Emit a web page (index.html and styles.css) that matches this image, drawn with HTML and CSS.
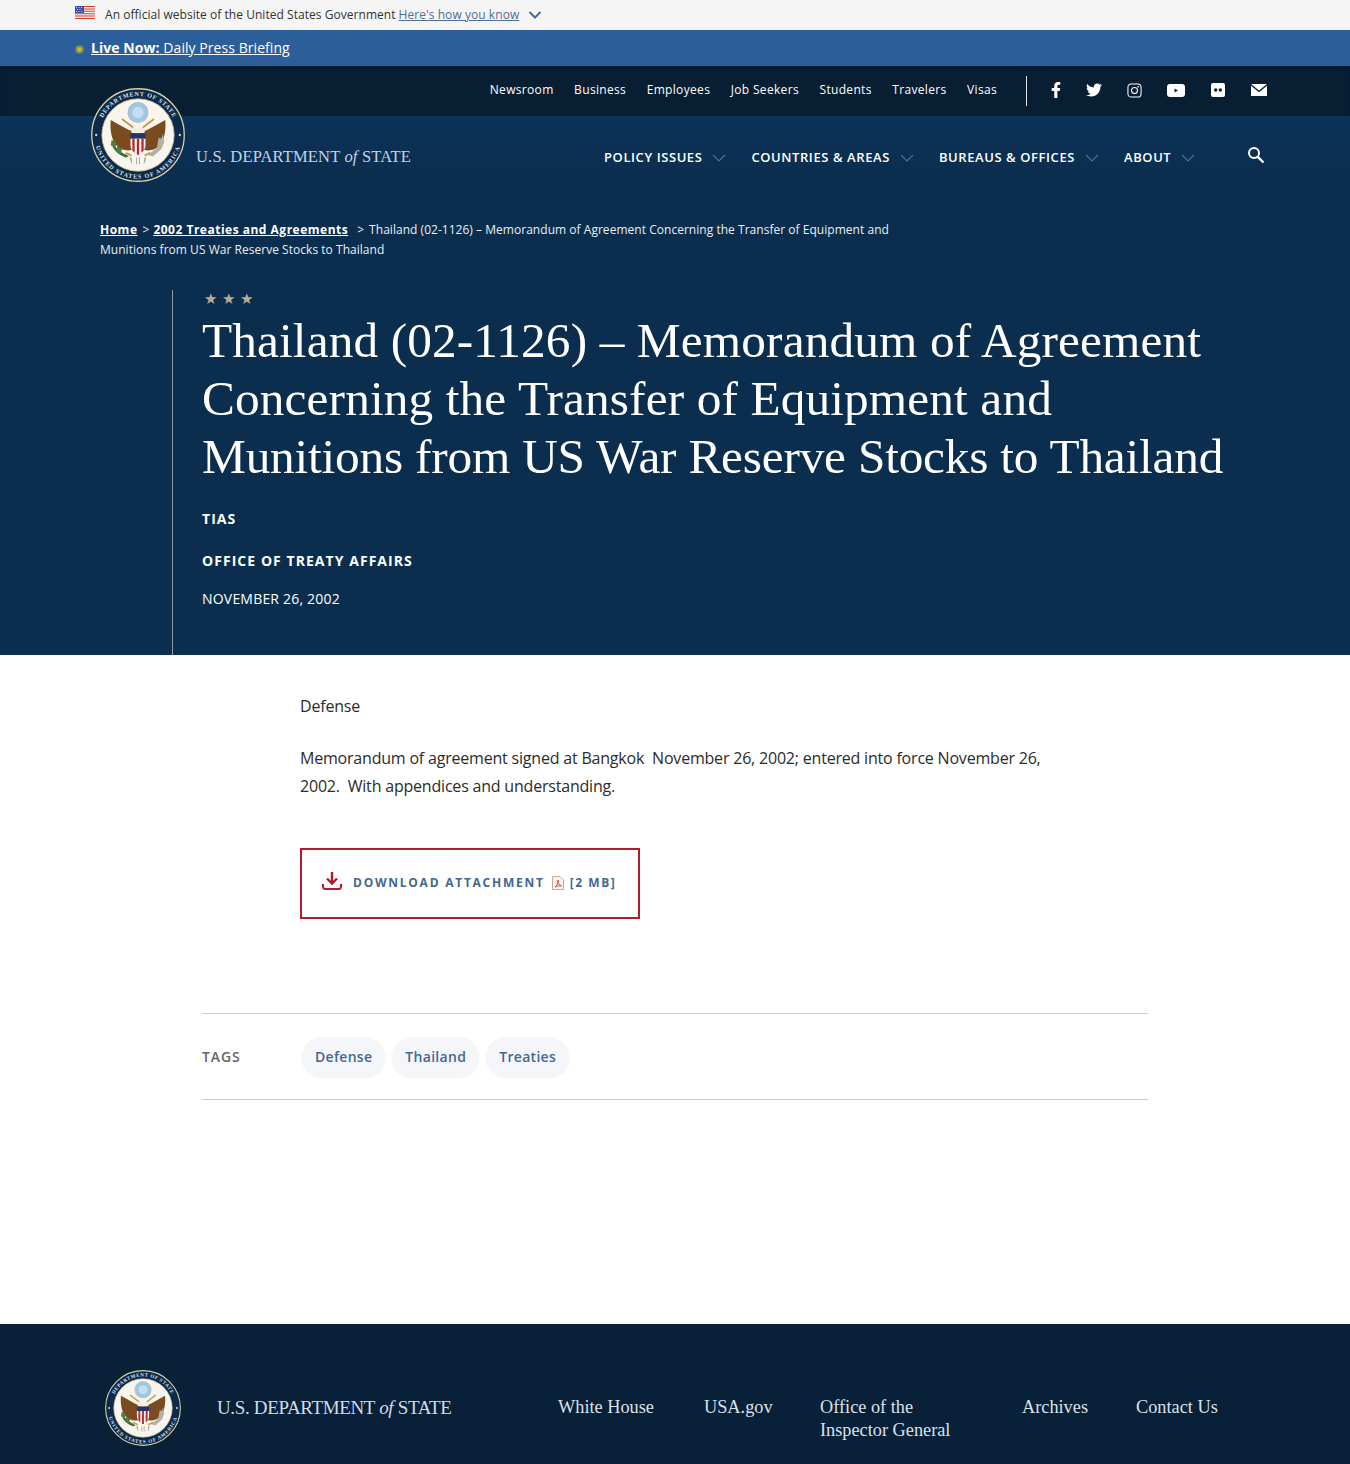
FILE: index.html
```html
<!DOCTYPE html>
<html lang="en">
<head>
<meta charset="utf-8">
<title>Thailand (02-1126)</title>
<link rel="stylesheet" href="styles.css">
</head>
<body>
<svg class="defs" width="0" height="0" aria-hidden="true">
  <defs>
    <path id="arc-top" d="M8.500 50a41.500 41.500 0 0 1 83 0"/>
    <path id="arc-bot" d="M3.500 50a46.500 46.500 0 0 0 93 0"/>
    <symbol id="seal" viewBox="0 0 100 100">
      <circle cx="50" cy="50" r="49.200" fill="#0c2a4c" stroke="#d8cfa6" stroke-width="1.400"/>
      <text class="seal-text"><textPath href="#arc-top" startOffset="50%" text-anchor="middle">DEPARTMENT OF STATE</textPath></text>
      <text class="seal-text seal-text-b"><textPath href="#arc-bot" startOffset="50%" text-anchor="middle">UNITED STATES OF AMERICA</textPath></text>
      <circle cx="5.500" cy="50" r="1.200" fill="#d9dfe6"/>
      <circle cx="94.500" cy="50" r="1.200" fill="#d9dfe6"/>
      <circle cx="50" cy="50" r="38.500" fill="#f7f5ee" stroke="#c9b97e" stroke-width=".8"/>
      <circle cx="50" cy="26" r="10.500" fill="#9cc7e6" stroke="#b8bcc0" stroke-width="1.400"/>
      <circle cx="50" cy="26" r="6" fill="#c4def0"/>
      <path d="M33 33 58 52M67 33 42 52" stroke="#b9983f" stroke-width="1.800"/>
      <path d="M46 47C38 44 30 39 21 34c-1 11 1 22 7 28 4 4 10 5 15 4l5-9z" fill="#7b4a1f"/>
      <path d="M54 47c8-3 16-8 25-13 1 11-1 22-7 28-4 4-10 5-15 4l-5-9z" fill="#7b4a1f"/>
      <circle cx="50" cy="42" r="5" fill="#f6f2e4"/>
      <rect x="43" y="43" width="14" height="5" fill="#f3eee0"/>
      <rect x="42" y="48" width="16" height="6" fill="#23366b"/>
      <path d="M42 54h16v7c0 5-4 8-8 10-4-2-8-5-8-10z" fill="#f5f1ea"/>
      <path d="M44 54h2.400v15l-2.400-2.500zM48.800 54h2.400v17h-2.400zM53.600 54H56v12.500L53.600 69z" fill="#b3262e"/>
      <path d="M24 60c3 3 6 8 14 11l2 2-3 1c-6-2-11-6-14-11z" fill="#3f6f35"/>
      <path d="M22 55l5 3-1 6-5-3zM28 62l5 2-1 6-5-3z" fill="#4f7d40"/>
      <path d="M60 71l10-7 2-11 3 1 1-5 2 8-3 8-9 8z" fill="#b3b1a6"/>
      <path d="M41 74l2 6h1l-1-6zM48 74v7h1v-7zM52 74v7h-1v-7zM59 74l-2 6h-1l1-6z" fill="#a6a49c"/>
      <path d="M37 69l6 3M63 69l-6 3" stroke="#c2a13e" stroke-width="2"/>
    </symbol>
    <symbol id="chev" viewBox="0 0 14 8"><path d="M1 1l6 6 6-6" fill="none" stroke="currentColor" stroke-width="1.100"/></symbol>
    <symbol id="chev-bold" viewBox="0 0 14 8"><path d="M1.500 1l5.500 5.500L12.500 1" fill="none" stroke="currentColor" stroke-width="2"/></symbol>
  </defs>
</svg>

<div class="gov-banner">
  <svg class="flag" viewBox="0 0 20 13" width="20" height="13">
    <rect width="20" height="13" fill="#f4f0ee"/>
    <path d="M0 0h20v1H0zM0 2.400h20v1H0zM0 4.800h20v1H0zM0 7.200h20v1H0zM0 9.600h20v1H0zM0 12h20v1H0z" fill="#d8402f"/>
    <rect width="9" height="7" fill="#3f4fa5"/>
    <path d="M1 1.500h1M3.500 1.500h1M6 1.500h1M2 3.500h1M4.500 3.500h1M1 5.500h1M3.500 5.500h1M6 5.500h1" stroke="#e6e8f5" stroke-width=".8"/>
  </svg>
  <span class="gov-text">An official website of the United States Government</span>
  <a class="gov-link" href="#">Here's how you know</a>
  <svg class="gov-chev"><use href="#chev-bold"/></svg>
</div>

<div class="live-bar">
  <svg class="live-dot" viewBox="0 0 10 10" width="9" height="9"><circle cx="5" cy="5" r="4.500" fill="#7d9a58"/><circle cx="5" cy="5" r="2.200" fill="#d8b62e"/></svg>
  <a class="live-link" href="#"><b>Live Now:</b> Daily Press Briefing</a>
</div>

<div class="dark-top">
<header class="site-header">
  <svg class="seal-main" aria-hidden="true"><use href="#seal"/></svg>
  <div class="util-bar">
    <nav class="util-links">
      <a href="#">Newsroom</a><a href="#">Business</a><a href="#">Employees</a><a href="#">Job Seekers</a><a href="#">Students</a><a href="#">Travelers</a><a href="#">Visas</a>
    </nav>
    <div class="social">
      <svg class="ic ic-f" viewBox="0 0 320 512"><path d="M279.14 288l14.22-92.66h-88.91v-60.13c0-25.35 12.42-50.06 52.24-50.06h40.42V6.26S260.43 0 225.36 0c-73.22 0-121.08 44.38-121.08 124.72v70.62H22.89V288h81.39v224h100.17V288z"/></svg>
      <svg class="ic ic-t" viewBox="0 0 512 512"><path d="M459.37 151.716c.325 4.548.325 9.097.325 13.645 0 138.72-105.583 298.558-298.558 298.558-59.452 0-114.68-17.219-161.137-47.106 8.447.974 16.568 1.299 25.34 1.299 49.055 0 94.213-16.568 130.274-44.832-46.132-.975-84.792-31.188-98.112-72.772 6.498.974 12.995 1.624 19.818 1.624 9.421 0 18.843-1.3 27.614-3.573-48.081-9.747-84.143-51.98-84.143-102.985v-1.299c13.969 7.797 30.214 12.67 47.431 13.319-28.264-18.843-46.781-51.005-46.781-87.391 0-19.492 5.197-37.36 14.294-52.954 51.655 63.675 129.3 105.258 216.365 109.807-1.624-7.797-2.599-15.918-2.599-24.04 0-57.828 46.782-104.934 104.934-104.934 30.213 0 57.502 12.67 76.67 33.137 23.715-4.548 46.456-13.32 66.599-25.34-7.798 24.366-24.366 44.833-46.132 57.827 21.117-2.273 41.584-8.122 60.426-16.243-14.292 20.791-32.161 39.308-52.628 54.253z"/></svg>
      <svg class="ic ic-i" viewBox="0 0 16 16"><rect x="1" y="1" width="14" height="14" rx="3.600" fill="none" stroke="#fff" stroke-width="1.100"/><circle cx="8" cy="8" r="3.200" fill="none" stroke="#fff" stroke-width="1.100"/><circle cx="12" cy="4" r=".9" fill="#fff"/></svg>
      <svg class="ic ic-y" viewBox="0 0 18 13"><rect width="18" height="13" rx="3" fill="#fff"/><path d="M7.500 4.500v4l3.500-2z" fill="#0a2136"/></svg>
      <svg class="ic ic-fl" viewBox="0 0 14 14"><rect width="14" height="14" rx="2" fill="#fff"/><circle cx="4.700" cy="7" r="1.700" fill="#0a2136"/><circle cx="9.300" cy="7" r="1.700" fill="#0a2136"/></svg>
      <svg class="ic ic-m" viewBox="0 0 16 12"><path d="M0 0h16L8 6.500zM0 1.800 8 8.300l8-6.500V12H0z" fill="#fff"/></svg>
    </div>
  </div>
  <div class="main-nav">
    <div class="wordmark">U.S. DEPARTMENT <i>of</i> STATE</div>
    <nav class="nav-items">
      <a href="#">POLICY ISSUES<svg class="nav-chev"><use href="#chev"/></svg></a>
      <a href="#">COUNTRIES &amp; AREAS<svg class="nav-chev"><use href="#chev"/></svg></a>
      <a href="#">BUREAUS &amp; OFFICES<svg class="nav-chev"><use href="#chev"/></svg></a>
      <a href="#">ABOUT<svg class="nav-chev"><use href="#chev"/></svg></a>
    </nav>
    <svg class="search" viewBox="0 0 18 18"><circle cx="7" cy="7" r="5" fill="none" stroke="#fff" stroke-width="2"/><path d="M10.800 10.800 16.500 16.500" stroke="#fff" stroke-width="2.400"/></svg>
  </div>
</header>

<section class="hero">
  <div class="crumbs"><a href="#">Home</a><span class="sep">&gt;</span><a href="#">2002 Treaties and Agreements</a><span class="sep sep-wide">&gt;</span>Thailand (02-1126) – Memorandum of Agreement Concerning the Transfer of Equipment and Munitions from US War Reserve Stocks to Thailand</div>
  <div class="head-block">
    <div class="stars">★ ★ ★</div>
    <h1 class="title"><span class="t-wide">Thailand (02-1126) – Memorandum of Agreement</span><br><span class="t-wide">Concerning the Transfer of Equipment and</span><br><span class="t-tight">Munitions from US War Reserve Stocks to Thailand</span></h1>
    <p class="meta meta-first">TIAS</p>
    <p class="meta">OFFICE OF TREATY AFFAIRS</p>
    <p class="date">NOVEMBER 26, 2002</p>
  </div>
</section>
</div>

<main class="content">
  <div class="body-text">
    <p>Defense</p>
    <p>Memorandum of agreement signed at Bangkok&nbsp; November 26, 2002; entered into force November 26, 2002.&nbsp; With appendices and understanding.</p>
  </div>
  <a class="download" href="#">
    <svg class="dl-icon" viewBox="0 0 20 18" width="20" height="18"><path d="M10 0v11M5 6.500l5 5 5-5" fill="none" stroke="#b31b2c" stroke-width="2.400"/><path d="M1 12v2.500c0 1.500 1 2.500 2.500 2.500h13c1.500 0 2.500-1 2.500-2.500V12" fill="none" stroke="#b31b2c" stroke-width="2"/></svg>
    <span class="dl-label">DOWNLOAD ATTACHMENT</span>
    <svg class="pdf-icon" viewBox="0 0 12 14" width="12" height="14"><path d="M.5.500h7.500l3.500 3.500v9.500H.5z" fill="#fbf3ee" stroke="#c9a99a"/><path d="M3 11c2-1 3-4 3-7 0 3 1 5 3.500 6-3-.5-4.500 0-6.500 1z" fill="none" stroke="#c8412f" stroke-width=".9"/></svg>
    <span class="dl-size">[2 MB]</span>
  </a>
  <div class="tags">
    <span class="tags-label">TAGS</span>
    <a class="pill" href="#">Defense</a>
    <a class="pill" href="#">Thailand</a>
    <a class="pill" href="#">Treaties</a>
  </div>
</main>

<footer class="footer">
  <svg class="seal-foot" aria-hidden="true"><use href="#seal"/></svg>
  <div class="foot-mark">U.S. DEPARTMENT <i>of</i> STATE</div>
  <nav class="foot-links">
    <a class="fl-1" href="#">White House</a>
    <a class="fl-2" href="#">USA.gov</a>
    <a class="fl-3" href="#">Office of the<br>Inspector General</a>
    <a class="fl-4" href="#">Archives</a>
    <a class="fl-5" href="#">Contact Us</a>
  </nav>
</footer>
</body>
</html>
```
FILE: styles.css
```css
* { box-sizing: border-box; }
html, body { margin: 0; padding: 0; }
body {
  width: 1350px;
  height: 1464px;
  overflow: hidden;
  background: #fff;
  font-family: "Open Sans", "Liberation Sans", sans-serif;
  color: #212529;
}
a { color: inherit; }
.defs { position: absolute; }
.seal-text {
  font-family: "Liberation Serif", serif;
  font-size: 6.500px;
  font-weight: 700;
  letter-spacing: .8px;
  fill: #dfe5ec;
}
.seal-text-b { letter-spacing: 1.100px; }

/* gov banner */
.gov-banner {
  height: 30px;
  display: flex;
  align-items: center;
  padding: 0 0 2px 75px;
  background: #f5f5f5;
  font-size: 12px;
  color: #333;
}
.flag { margin-right: 10px; margin-top: -3px; }
.gov-text { letter-spacing: .04px; }
.gov-link { margin-left: 3px; color: #4f6f96; letter-spacing: .06px; }
.gov-chev { width: 14px; height: 8px; margin-left: 9px; margin-top: 2px; color: #4a6a92; }

/* live bar */
.live-bar {
  height: 36px;
  display: flex;
  align-items: center;
  padding-left: 75px;
  background: #2c5e9a;
  color: #fff;
  font-size: 14px;
  letter-spacing: .06px;
}
.live-dot { margin-right: 7px; margin-top: 3px; }
.live-link { margin-bottom: 2px; }

/* header */
.dark-top { background: linear-gradient(#0c3358 50px, #0b2e4f 110px); }
.site-header { position: relative; height: 134px; }
.seal-main { position: absolute; left: 91px; top: 22px; width: 94px; height: 94px; }
.util-bar {
  height: 50px;
  display: flex;
  align-items: center;
  justify-content: flex-end;
  background: #081e33;
  box-shadow: inset 0 3px 3px -1px rgba(0, 20, 50, .6);
  color: #fff;
}
.util-links { display: flex; gap: 20.500px; font-size: 12px; letter-spacing: .33px; margin-right: 29px; margin-top: -4px; }
.util-links a { text-decoration: none; }
.social {
  width: 324px;
  height: 30px;
  display: flex;
  align-items: center;
  border-left: 1px solid #e5e9ee;
}
.ic { fill: #fff; display: block; margin-top: -2px; }
.ic-f { width: 10px; height: 16px; margin-left: 24px; }
.ic-t { width: 16px; height: 16px; margin-left: 25px; }
.ic-i { width: 15px; height: 15px; margin-left: 25px; }
.ic-y { width: 18px; height: 13px; margin-left: 25px; }
.ic-fl { width: 14px; height: 14px; margin-left: 26px; }
.ic-m { width: 16px; height: 12px; margin-left: 26px; }

.main-nav { height: 84px; display: flex; align-items: flex-start; padding-left: 196px; color: #fff; }
.wordmark {
  width: 408px;
  padding-top: 31px;
  font-family: "Liberation Serif", serif;
  font-size: 16.500px;
  line-height: 20px;
  color: #c3d3e2;
  letter-spacing: .17px;
}
.nav-items { display: flex; padding-top: 32px; font-size: 13px; font-weight: 600; letter-spacing: .58px; line-height: 18px; }
.nav-items a { text-decoration: none; display: flex; align-items: center; margin-right: 25px; }
.nav-chev { width: 14px; height: 8px; margin-left: 10px; margin-top: 2px; color: #50718f; }
.search { width: 18px; height: 18px; margin: 30px 0 0 27px; }

/* hero */
.hero { height: 455px; color: #fff; padding: 20px 0 0 100px; }
.crumbs { width: 800px; font-size: 12px; line-height: 20px; color: #e8eef4; letter-spacing: .03px; }
.crumbs a { font-weight: 700; color: #fff; letter-spacing: .5px; }
.sep { margin: 0 4px 0 5px; }
.sep-wide { margin: 0 5px 0 9px; }
.head-block {
  height: 365px;
  margin: 30px 0 0 72px;
  padding: 0 0 0 29px;
  border-left: 1px solid #8b9bab;
}
.stars { color: #b9ab8f; font-size: 15px; line-height: 16px; letter-spacing: .5px; padding-left: 2px; }
.title {
  margin: 6px 0 0;
  white-space: nowrap;
  font-family: "Liberation Serif", serif;
  font-weight: 400;
  font-size: 49.300px;
  line-height: 58px;
  color: #fff;
}
.t-wide { letter-spacing: .13px; }
.t-tight { letter-spacing: -.2px; }
.meta { margin: 0 0 26px; font-size: 14px; line-height: 16px; font-weight: 700; letter-spacing: 1.050px; }
.meta-first { margin-top: 25px; }
.date { margin: -4px 0 0; font-size: 14px; line-height: 16px; letter-spacing: .2px; }

/* content */
.content { padding: 37px 0 0 202px; }
.body-text { width: 760px; margin-left: 98px; font-size: 16px; line-height: 28px; letter-spacing: -.2px; color: #2b2b2b; }
.body-text p { margin: 0 0 24px; }
.download {
  width: 340px;
  height: 71px;
  margin: 48px 0 0 98px;
  padding: 0 0 2px 20px;
  display: flex;
  align-items: center;
  border: 2px solid #b31b2c;
  text-decoration: none;
  color: #44678f;
  font-size: 12px;
  font-weight: 700;
}
.dl-icon { margin-bottom: 4px; }
.dl-label { margin-left: 11px; letter-spacing: 1.750px; }
.pdf-icon { margin-left: 7px; margin-top: 1px; }
.dl-size { margin-left: 6px; letter-spacing: 1.550px; }

.tags {
  width: 946px;
  height: 87px;
  margin-top: 94px;
  display: flex;
  align-items: center;
  gap: 7px;
  border-top: 1px solid #ccc;
  border-bottom: 1px solid #ccc;
}
.tags-label { width: 93px; font-size: 14px; font-weight: 600; color: #666; letter-spacing: .9px; }
.pill {
  height: 40px;
  padding: 0 13px;
  display: flex;
  align-items: center;
  border-radius: 20px;
  background: #f5f6fa;
  box-shadow: 0 1px 2px rgba(0, 0, 0, .06);
  color: #44678f;
  font-size: 14px;
  font-weight: 600;
  letter-spacing: .3px;
  text-decoration: none;
}

/* footer */
.footer {
  margin-top: 224px;
  height: 140px;
  padding: 46px 0 0 105px;
  display: flex;
  align-items: flex-start;
  background: #082038;
}
.seal-foot { width: 76px; height: 76px; flex: none; }
.foot-mark {
  width: 341px;
  margin-left: 36px;
  padding-top: 26px;
  font-family: "Liberation Serif", serif;
  font-size: 19px;
  line-height: 23px;
  letter-spacing: -.35px;
  color: #cfdce8;
  white-space: nowrap;
}
.foot-links {
  display: flex;
  padding-top: 26px;
  font-family: "Liberation Serif", serif;
  font-size: 18.300px;
  line-height: 23px;
  color: #d9e2ea;
}
.foot-links a { text-decoration: none; white-space: nowrap; flex: none; }
.fl-1 { width: 146px; }
.fl-2 { width: 116px; }
.fl-3 { width: 202px; }
.fl-4 { width: 114px; }
```
